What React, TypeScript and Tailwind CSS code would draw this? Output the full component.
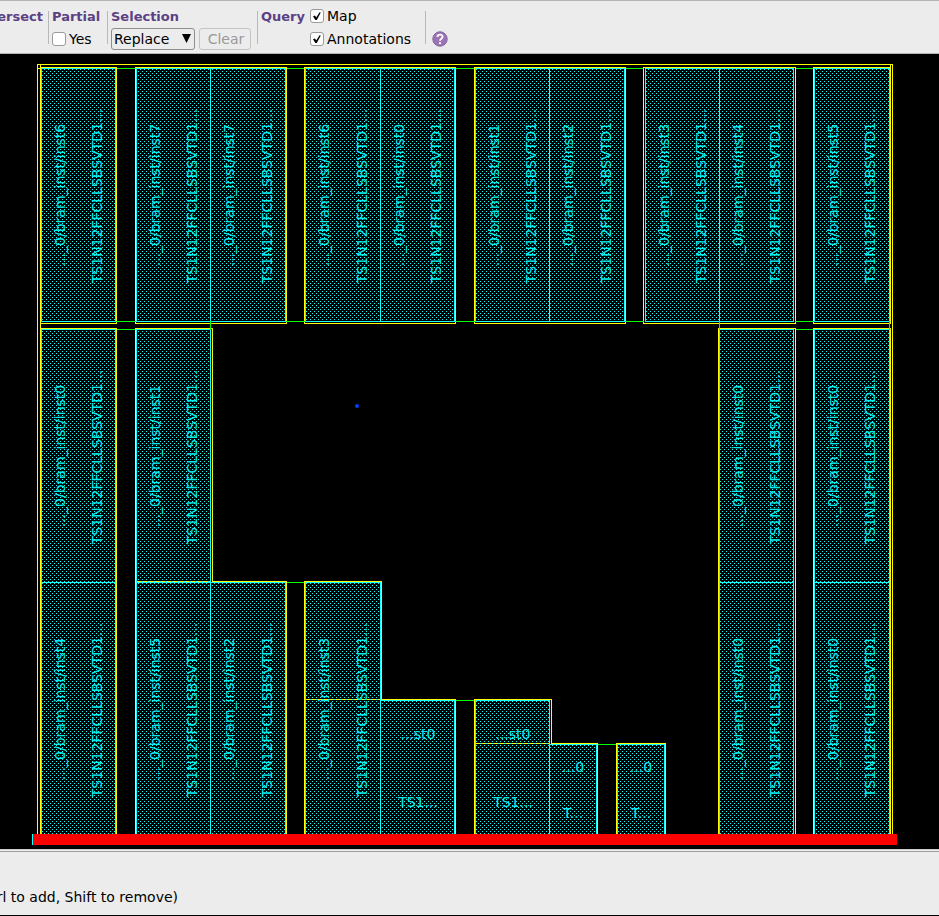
import type { ReactNode } from 'react';

const CYAN = '#14ffff';
const YELLOW = '#ffff00';
const GREEN = '#00ff00';

type Span = [x1: number, y1: number, x2: number, y2: number];

// Filled areas of the macros
const fills: Span[] = [
  [41, 68, 115, 321], [136, 68, 285, 321], [305, 68, 454, 321], [475, 68, 624, 321],
  [645, 68, 793, 321], [814, 68, 889, 321],
  [41, 329, 115, 834], [136, 329, 210, 834], [210, 582, 285, 834], [305, 582, 380, 834],
  [380, 700, 454, 834], [475, 700, 549, 834], [549, 744, 596, 834], [617, 744, 664, 834],
  [719, 329, 793, 834], [814, 329, 889, 834],
];

const yellowLines: Span[] = [
  // die boundary
  [37, 64, 892, 64], [37, 64, 37, 834], [892, 64, 892, 834], [40, 64, 40, 834],
  [890, 64, 890, 323], [890, 328, 890, 834], [37, 68, 40, 68],
  // upper row
  [40, 67, 116, 67], [116, 67, 116, 323], [40, 323, 116, 323],
  [135, 67, 286, 67], [135, 67, 135, 323], [286, 67, 286, 323], [135, 323, 286, 323],
  [304, 67, 455, 67], [304, 67, 304, 323], [455, 67, 455, 323], [304, 323, 455, 323],
  [474, 67, 625, 67], [474, 67, 474, 323], [625, 67, 625, 323], [474, 323, 625, 323],
  [643, 67, 795, 67], [643, 67, 643, 323], [795, 67, 795, 323], [643, 323, 795, 323],
  [813, 67, 890, 67], [813, 67, 813, 323], [813, 323, 890, 323],
  // lower rows
  [40, 328, 116, 328], [116, 328, 116, 834],
  [135, 328, 212, 328], [135, 328, 135, 834], [212, 328, 212, 581], [212, 581, 286, 581], [286, 581, 286, 834],
  [304, 581, 381, 581], [304, 581, 304, 834], [381, 581, 381, 699], [381, 699, 455, 699], [455, 699, 455, 834],
  [474, 699, 551, 699], [474, 699, 474, 834], [551, 699, 551, 743], [551, 743, 597, 743], [597, 743, 597, 834],
  [616, 743, 665, 743], [616, 743, 616, 834], [665, 743, 665, 834],
  [718, 328, 795, 328], [718, 328, 718, 834], [795, 328, 795, 834],
  [813, 328, 890, 328], [813, 328, 813, 834],
];

const cyanLines: Span[] = [
  [210, 68, 210, 321], [380, 68, 380, 321], [549, 68, 549, 321], [719, 68, 719, 321],
  [41, 582, 115, 582], [136, 582, 210, 582], [719, 582, 793, 582], [814, 582, 889, 582],
  [32, 834, 32, 844],
];

const greenLines: Span[] = [
  [117, 68, 134, 68], [287, 68, 303, 68], [456, 68, 473, 68], [626, 68, 642, 68], [796, 68, 812, 68],
  [116, 321, 135, 321], [286, 321, 304, 321], [455, 321, 474, 321], [625, 321, 643, 321], [795, 321, 813, 321],
  [117, 329, 134, 329], [796, 329, 812, 329],
  [210, 321, 210, 329], [719, 321, 719, 329], [889, 321, 889, 329],
  [287, 582, 303, 582], [456, 700, 473, 700], [598, 744, 615, 744],
];

const dashedLines: Span[] = [[137, 581, 209, 581], [306, 699, 379, 699], [476, 743, 548, 743]];

// [instance baseline, reference baseline, vertical centre, instance number]
const macros: [number, number, number, number][] = [
  [65, 102, 196, 6], [160, 197, 196, 7], [234, 272, 196, 7], [329, 367, 196, 6], [404, 441, 196, 0],
  [499, 536, 196, 1], [573, 611, 196, 2], [669, 706, 196, 3], [743, 780, 196, 4], [838, 875, 196, 5],
  [65, 102, 457, 0], [160, 197, 457, 1], [743, 780, 457, 0], [838, 875, 457, 0],
  [65, 102, 710, 4], [160, 197, 710, 5], [234, 272, 710, 2], [329, 367, 710, 3], [743, 780, 710, 0], [838, 875, 710, 0],
];

const smallLabels: [number, number, string][] = [
  [418, 739, '...st0'], [418, 807, 'TS1...'], [513, 739, '...st0'], [513, 807, 'TS1...'],
  [573, 772, '...0'], [573, 818, 'T...'], [641, 772, '...0'], [641, 818, 'T...'],
];

function Lines({ spans, color }: { spans: Span[]; color: string }) {
  return (
    <g fill={color}>
      {spans.map(([x1, y1, x2, y2], i) => (
        <rect key={i} x={x1} y={y1} width={x2 - x1 + 1} height={y2 - y1 + 1} />
      ))}
    </g>
  );
}

function Floorplan() {
  return (
    <svg width={939} height={795} viewBox="0 54 939 795" className="block shrink-0 text-sm" role="img" aria-label="Floorplan">
      <defs>
        <pattern id="stipple" width="4" height="4" patternUnits="userSpaceOnUse">
          <rect x="0" y="1" width="1" height="1" fill={CYAN} />
          <rect x="2" y="3" width="1" height="1" fill={CYAN} />
        </pattern>
      </defs>
      <g shapeRendering="crispEdges">
        {fills.map(([x1, y1, x2, y2], i) => (
          <g key={i}>
            <rect x={x1} y={y1} width={x2 - x1 + 1} height={y2 - y1 + 1} fill="url(#stipple)" />
            <rect x={x1 + 0.5} y={y1 + 0.5} width={x2 - x1} height={y2 - y1} fill="none" stroke={CYAN} />
          </g>
        ))}
        <Lines spans={yellowLines} color={YELLOW} />
        <Lines spans={cyanLines} color={CYAN} />
        <Lines spans={greenLines} color={GREEN} />
        {dashedLines.map(([x1, y1, x2], i) => (
          <g key={i}>
            <path d={`M${x1} ${y1 + 0.5}H${x2 + 1}`} stroke={CYAN} />
            <path d={`M${x1} ${y1 + 0.5}H${x2 + 1}`} stroke={YELLOW} strokeDasharray="4 2" />
          </g>
        ))}
      </g>
      <g fill="#00f0f0" textAnchor="middle">
        {macros.map(([inst, ref, y, n], i) => (
          <g key={i}>
            <text transform={`translate(${inst} ${y - 1}) rotate(-90)`}>{`..._0/bram_inst/inst${n}`}</text>
            <text transform={`translate(${ref} ${y}) rotate(-90)`}>TS1N12FFCLLSBSVTD1...</text>
          </g>
        ))}
        {smallLabels.map(([x, y, label], i) => (
          <text key={i} x={x} y={y}>{label}</text>
        ))}
      </g>
      <rect x="33" y="834" width="864" height="11" fill="#ff0000" />
      <circle cx="357" cy="406" r="2" fill="#0040ff" />
    </svg>
  );
}

function Heading({ children }: { children: ReactNode }) {
  return <div className="h-[22px] text-[13px] font-bold leading-6 text-[#5b4184]">{children}</div>;
}

function Tick({ label, checked = false }: { label: string; checked?: boolean }) {
  return (
    <label className="flex h-[22px] items-center gap-[3px]">
      <span className="relative block size-[14px]">
        <input
          type="checkbox"
          defaultChecked={checked}
          className="peer block size-[14px] appearance-none rounded-[3px] border border-[#9a9a9a] bg-white"
        />
        <svg viewBox="0 0 14 14" className="pointer-events-none absolute inset-0 hidden size-[14px] peer-checked:block">
          <path d="M3 7.2 5 6.6 6.2 8.6 9.6 3.2 10.8 3.6 6.8 11 5.4 11Z" fill="#000" />
        </svg>
      </span>
      <span>{label}</span>
    </label>
  );
}

function Divider() {
  return <div className="mt-[6px] h-[33px] w-px shrink-0 bg-[#b8b8b8]" />;
}

export default function App() {
  return (
    <div className="flex min-h-screen flex-col overflow-hidden bg-black font-['DejaVu_Sans','Liberation_Sans',sans-serif] text-sm text-black">
      <header className="flex h-[54px] shrink-0 items-start whitespace-nowrap border-y border-[#b4b4b4] bg-[#ececec] pt-1">
        <div className="flex w-[43px] justify-end">
          <Heading>ersect</Heading>
        </div>
        <div className="w-[5px]" />
        <Divider />
        <div className="flex w-[58px] flex-col gap-px pl-[3px]">
          <Heading>Partial</Heading>
          <Tick label="Yes" />
        </div>
        <Divider />
        <div className="w-[149px] pl-[3px]">
          <Heading>Selection</Heading>
          <div className="flex gap-1 pt-px">
            <div className="relative">
              <select
                aria-label="Selection"
                className="block h-[22px] w-[84px] appearance-none rounded-[3px] border border-[#8e8e8e] bg-[#ececec] pl-[2px] leading-5"
              >
                <option>Replace</option>
              </select>
              <svg viewBox="0 0 9 9" className="pointer-events-none absolute right-1 top-[6px] size-[9px]">
                <path d="M0 0H9L4.5 9Z" />
              </svg>
            </div>
            <button disabled className="h-[22px] w-[52px] rounded-[3px] border border-[#c4c4c4] pl-[2px] leading-5 text-[#999]">
              Clear
            </button>
          </div>
        </div>
        <Divider />
        <div className="flex w-[167px] gap-[5px] pl-[3px]">
          <Heading>Query</Heading>
          <div className="flex flex-col gap-px">
            <Tick label="Map" checked />
            <Tick label="Annotations" checked />
          </div>
        </div>
        <Divider />
        <button aria-label="Help" className="ml-[6px] mt-[26px] block size-4">
          <svg viewBox="0 0 16 16" className="block size-4">
            <circle cx="8" cy="8" r="7.2" fill="#9a74b4" stroke="#83609e" />
            <path d="M5.4 6C5.4 2.8 10.6 2.8 10.6 5.8C10.6 7.8 8 7.6 8 9.8" fill="none" stroke="#fff" strokeWidth="1.8" />
            <circle cx="8" cy="12.2" r="1.1" fill="#fff" />
          </svg>
        </button>
      </header>
      <main className="flex flex-1 overflow-hidden">
        <Floorplan />
      </main>
      <footer className="flex h-[67px] shrink-0 flex-col border-b border-black bg-[#ececec]">
        <div className="h-[3px] border-y border-t-[#d0d0d0] border-b-[#a0a0a0]" />
        <p className="mt-[35px] flex w-[178px] justify-end whitespace-nowrap leading-5">
          rl to add, Shift to remove)
        </p>
      </footer>
    </div>
  );
}
